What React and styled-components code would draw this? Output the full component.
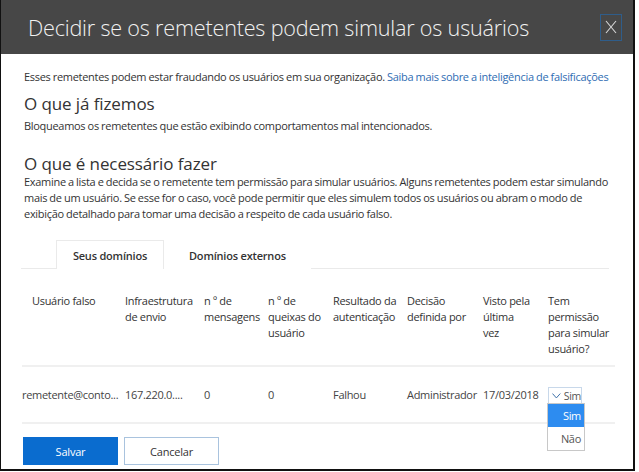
import React from "react";
import styled, { createGlobalStyle } from "styled-components";

const Global = createGlobalStyle`
  html, body { margin: 0; padding: 0; background: #fff; }
  body { font-family: "Open Sans", "Noto Sans", sans-serif; color: #333; }
`;

const Dialog = styled.div`
  width: 632px;
  height: 469px;
  border-left: 1px solid #111;
  border-right: 2px solid #111;
  border-bottom: 2px solid #111;
  display: flex;
  flex-direction: column;
  background: #fff;
  overflow: hidden;
`;

const Header = styled.div`
  height: 54px;
  background: #474747;
  display: flex;
  align-items: center;
  justify-content: space-between;
  padding: 0 11px 0 27px;
  flex-shrink: 0;
`;

const Title = styled.h1`
  margin: 0;
  font-weight: 300;
  font-size: 21.6px;
  color: #f2f2f2;
  letter-spacing: -0.2px;
`;

const Close = styled.button`
  width: 22px;
  height: 27px;
  border: 1px solid #2f5d8a;
  background: transparent;
  display: flex;
  align-items: center;
  justify-content: center;
  padding: 0;
`;

const Body = styled.div`
  padding: 15px 0 0 23px;
  display: flex;
  flex-direction: column;
`;

const Text = styled.p`
  margin: 0;
  font-size: 11px;
  line-height: 16px;
  letter-spacing: -0.3px;
  word-spacing: -0.3px;
`;

const Line = styled.span`
  display: block;
  white-space: nowrap;
`;

const Link = styled.a`
  color: #2f6db3;
  text-decoration: none;
`;

const Heading = styled.h2`
  margin: ${(p) => p.$top}px 0 ${(p) => p.$bottom}px;
  font-size: 17px;
  font-weight: 400;
  line-height: 22px;
  color: #333;
  letter-spacing: -0.1px;
`;

const Tabs = styled.div`
  display: flex;
  margin: 18px 24px 0 -3px;
  border-bottom: 1px solid #eaeaea;
  padding-left: 35px;
  height: 28px;
`;

const Tab = styled.div`
  height: 29px;
  box-sizing: border-box;
  display: flex;
  align-items: center;
  justify-content: center;
  padding: 0 24px;
  font-size: 11px;
  font-weight: 600;
  letter-spacing: -0.2px;
  white-space: nowrap;
  color: #333;
  background: #fff;
  border: 1px solid ${(p) => (p.$active ? "#eaeaea" : "transparent")};
  border-bottom: none;
  ${(p) => (p.$w ? `width: ${p.$w}px; padding: 0;` : "")}
`;

const Grid = styled.div`
  display: grid;
  grid-template-columns: 103px 79px 64px 65px 74px 76px 65px 67px;
  margin: 24px 24px 0 -2px;
  font-size: 11px;
  line-height: 16px;
  letter-spacing: -0.3px;
`;

const HeadCell = styled.div`
  padding: 0 0 8px ${(p) => p.$pl || 0}px;
  border-bottom: 2px solid #f0f0f0;
  color: #333;
  white-space: nowrap;
`;

const Cell = styled.div`
  height: 55px;
  display: flex;
  align-items: center;
  border-bottom: 2px solid #f0f0f0;
  white-space: nowrap;
  position: relative;
  color: #444;
`;

const Select = styled.div`
  width: 34px;
  height: 17px;
  border: 1px solid #c8d8ea;
  box-sizing: border-box;
  display: flex;
  align-items: center;
  gap: 3px;
  padding-left: 3px;
  font-size: 10.5px;
  color: #555;
  overflow: hidden;
  position: relative;
  top: 1px;
`;

const Menu = styled.div`
  position: absolute;
  left: -1px;
  top: 36px;
  width: 36px;
  border: 1px solid #c8c8c8;
  background: #fff;
  z-index: 2;
`;

const Option = styled.div`
  height: 23px;
  display: flex;
  align-items: center;
  justify-content: flex-end;
  padding-right: 3px;
  font-size: 11px;
  background: ${(p) => (p.$sel ? "#2d8cf0" : "#fff")};
  color: ${(p) => (p.$sel ? "#fff" : "#555")};
`;

const Footer = styled.div`
  display: flex;
  gap: 6px;
  padding: 13px 0 0 22px;
`;

const Button = styled.button`
  width: 95px;
  height: 28px;
  box-sizing: border-box;
  font-family: inherit;
  font-size: 11px;
  letter-spacing: -0.2px;
  border: 1px solid ${(p) => (p.$primary ? "#0a6ccf" : "#a9c3de")};
  background: ${(p) => (p.$primary ? "#0a6ccf" : "#fff")};
  color: ${(p) => (p.$primary ? "#fff" : "#333")};
`;

const headers = [
  [["Usuário falso"], 10],
  [["Infraestrutura", "de envio"]],
  [["n º de", "mensagens"]],
  [["n º de", "queixas do", "usuário"]],
  [["Resultado da", "autenticação"]],
  [["Decisão", "definida por"]],
  [["Visto pela", "última", "vez"]],
  [["Tem", "permissão", "para simular", "usuário?"]],
];

const row = ["remetente@conto...", "167.220.0....", "0", "0", "Falhou", "Administrador", "17/03/2018"];

export default function App() {
  return (
    <>
      <Global />
      <Dialog>
        <Header>
          <Title>Decidir se os remetentes podem simular os usuários</Title>
          <Close aria-label="Fechar">
            <svg width="12" height="14" viewBox="0 0 12 14">
              <path d="M1 1 L11 13 M11 1 L1 13" stroke="#d8d8d8" strokeWidth="1.1" />
            </svg>
          </Close>
        </Header>
        <Body>
          <Text>
            <Line>
              Esses remetentes podem estar fraudando os usuários em sua organização.{" "}
              <Link href="#">Saiba mais sobre a inteligência de falsificações</Link>
            </Line>
          </Text>
          <Heading $top={8} $bottom={3}>O que já fizemos</Heading>
          <Text>Bloqueamos os remetentes que estão exibindo comportamentos mal intencionados.</Text>
          <Heading $top={19} $bottom={-1}>O que é necessário fazer</Heading>
          <Text>
            <Line>Examine a lista e decida se o remetente tem permissão para simular usuários. Alguns remetentes podem estar simulando</Line>
            <Line>mais de um usuário. Se esse for o caso, você pode permitir que eles simulem todos os usuários ou abram o modo de</Line>
            <Line>exibição detalhado para tomar uma decisão a respeito de cada usuário falso.</Line>
          </Text>
          <Tabs>
            <Tab $active $w={108}>Seus domínios</Tab>
            <Tab>Domínios externos</Tab>
          </Tabs>
          <Grid>
            {headers.map(([lines, pl], i) => (
              <HeadCell key={i} $pl={pl}>
                {lines.map((l, j) => (
                  <Line key={j}>{l}</Line>
                ))}
              </HeadCell>
            ))}
            {row.map((c, i) => (
              <Cell key={i}>{c}</Cell>
            ))}
            <Cell>
              <Select>
                <svg width="9" height="6" viewBox="0 0 9 6">
                  <path d="M0.5 0.5 L4.5 5 L8.5 0.5" fill="none" stroke="#3a6ea8" strokeWidth="1" />
                </svg>
                Sim
              </Select>
              <Menu>
                <Option $sel>Sim</Option>
                <Option>Não</Option>
              </Menu>
            </Cell>
          </Grid>
        </Body>
        <Footer>
          <Button $primary>Salvar</Button>
          <Button>Cancelar</Button>
        </Footer>
      </Dialog>
    </>
  );
}
